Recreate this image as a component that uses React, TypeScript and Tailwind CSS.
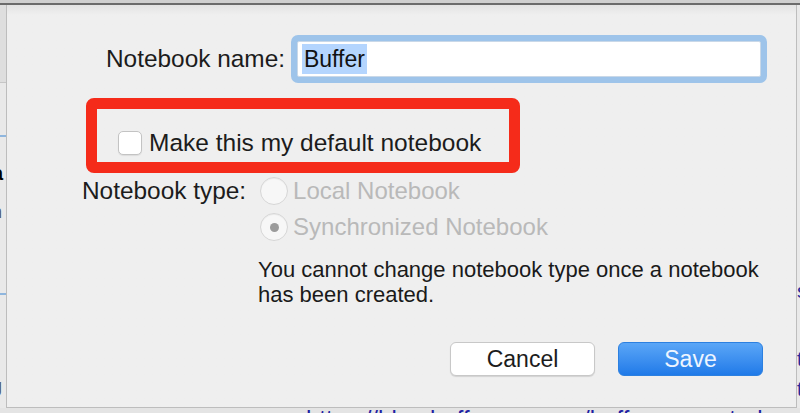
import React from "react";

function Radio({ checked = false, label }: { checked?: boolean; label: string }) {
  return (
    <div className="flex h-[28px] items-center gap-[5px]">
      <span className="grid h-[28px] w-[28px] place-content-center rounded-full border border-[#d6d6d6] bg-[#f7f7f7] shadow-[inset_0_1px_1px_rgba(0,0,0,0.05)]">
        {checked && <span className="block h-[9px] w-[9px] rounded-full bg-[#9b9b9b]" />}
      </span>
      <span className="text-[24px] leading-[28px] text-[#b9b9b9]">{label}</span>
    </div>
  );
}

export default function App() {
  return (
    <div className="h-[413px] w-[800px] overflow-hidden bg-[#e4e4e4] font-['Liberation_Sans',Arial,sans-serif]">
      <div className="h-[3px] bg-[#cfcfcf]" />
      <div className="h-[2px] bg-[#6b6b6b]" />

      <div className="flex h-[403px]">
        {/* page behind the sheet, cut off on the left */}
        <div className="flex w-[6px] flex-col overflow-hidden bg-[#e9e9e9]">
          <div className="h-[78px] border-b border-[#c6c6c6] bg-[#dedede]" />
          <div className="mt-[52px] h-[2px] bg-[#8fb6de]" />
          <div className="ml-[-8px] mt-[26px] text-[20px] font-bold leading-[20px] text-black">a</div>
          <div className="ml-[-8px] mt-[20px] text-[18px] leading-[18px] text-[#555]">n</div>
          <div className="ml-[-6px] mt-[0px] text-[18px] leading-[20px] text-[#555]">/</div>
          <div className="mt-[52px] h-[2px] bg-[#8fb6de]" />
          <div className="ml-[-8px] mt-[82px] text-[18px] leading-[18px] text-[#555]">g</div>
        </div>

        {/* sheet */}
        <div className="flex flex-1 flex-col border-x border-b border-[#bdbdbd] bg-gradient-to-b from-[#e3e3e3] from-[0px] to-[#efefef] to-[10px]">
          <div className="ml-[99px] mt-[30px] flex items-center gap-[6px]">
            <span className="text-[24.4px] leading-[30px] text-[#1c1c1c]">Notebook name:</span>
            <div className="h-[48px] w-[476px] rounded-[7px] bg-[#9ec4ea] p-[6px]">
              <div className="flex h-full items-center rounded-[2px] border border-[#c9d8e8] bg-white pl-[4px]">
                <span className="bg-[#b4d5fe] px-[2px] text-[23px] leading-[30px] text-[#111]">Buffer</span>
              </div>
            </div>
          </div>

          <div className="ml-[79px] mt-[15px] h-[75px] w-[434px] rounded-[8px] border-[11px] border-[#f52b1a] pl-[21px] pt-[21px]">
            <label className="flex items-center gap-[7px]">
              <span className="block h-[24px] w-[24px] rounded-[5px] border border-[#c3c3c3] bg-white shadow-[0_1px_1px_rgba(0,0,0,0.08)]" />
              <span className="text-[24.5px] leading-[26px] text-[#1c1c1c]">Make this my default notebook</span>
            </label>
          </div>

          <div className="ml-[75px] mt-[4px] flex gap-[14px]">
            <span className="text-[24.4px] leading-[28px] text-[#1c1c1c]">Notebook type:</span>
            <div className="flex flex-col gap-[8px]">
              <Radio label="Local Notebook" />
              <Radio checked label="Synchronized Notebook" />
            </div>
          </div>

          <p className="ml-[251px] mt-[16px] w-[515px] text-[22px] leading-[25px] text-[#1a1a1a]">
            You cannot change notebook type once a notebook has been created.
          </p>

          <div className="mt-[35px] flex justify-end gap-[23px] pr-[33px]">
            <button
              type="button"
              className="h-[34px] w-[145px] rounded-[6px] border border-[#c8c8c8] bg-white text-[23px] leading-[30px] text-[#1c1c1c] shadow-[0_1px_1px_rgba(0,0,0,0.12)]"
            >
              Cancel
            </button>
            <button
              type="button"
              className="h-[34px] w-[145px] rounded-[6px] border border-[#2c80e0] bg-gradient-to-b from-[#5aa6f7] to-[#1f7ae8] text-[23px] leading-[30px] text-[#eef5ff]"
            >
              Save
            </button>
          </div>
        </div>

        {/* page behind the sheet, cut off on the right */}
        <div className="flex w-[3px] flex-col overflow-hidden bg-[#e9e9e9]">
          <div className="mt-[276px] text-[20px] leading-[20px] text-[#2a2a9c]">s</div>
          <div className="mt-[48px] text-[20px] leading-[20px] text-[#2a2a9c]">t</div>
          <div className="mt-[10px] text-[20px] leading-[20px] text-[#2a2a9c]">t</div>
        </div>
      </div>

      <div className="ml-[306px] mt-[-1px] whitespace-nowrap text-[24px] leading-[24px] text-[#1f1fa3]">
        https://blog.bufferapp.com/buffer-case-study
      </div>
    </div>
  );
}
